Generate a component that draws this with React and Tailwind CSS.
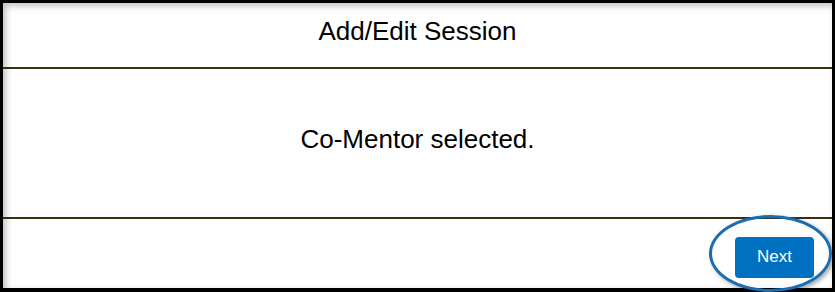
import React from 'react';

const App = () => {
    return (
        <div className="w-[835px] h-[292px] bg-white overflow-hidden" style={{ fontFamily: '"Liberation Sans", Arial, sans-serif' }}>
            <div className="relative w-full h-full flex flex-col border-t-[3px] border-l-[3px] border-r-[3px] border-b-[4px] border-black shadow-[inset_3px_3px_6px_rgba(0,0,0,0.25)]">
                {/* header */}
                <div className="h-[64px] flex items-center justify-center pb-[7px]">
                    <h1 className="text-[26px] text-black">Add/Edit Session</h1>
                </div>
                <div className="h-[2px] bg-[#3a2f12]" />
                {/* body */}
                <div className="h-[148px] flex items-center justify-center pb-[7px]">
                    <p className="text-[26px] text-black">Co-Mentor selected.</p>
                </div>
                <div className="h-[2px] bg-[#3a2f12]" />
                {/* footer */}
                <div className="flex-1 flex items-center justify-end pr-[18px] pt-[7px]">
                    <button className="w-[79px] h-[41px] rounded-[4px] bg-[#0070c0] text-white text-[17px]">Next</button>
                </div>
                {/* highlight ring */}
                <div className="absolute left-[706px] top-[212px] w-[123px] h-[77px] rounded-[50%] border-[3px] border-[#1a6db0] shadow-[2px_2px_4px_rgba(0,0,0,0.35)]" />
            </div>
        </div>
    );
};

export default App;
